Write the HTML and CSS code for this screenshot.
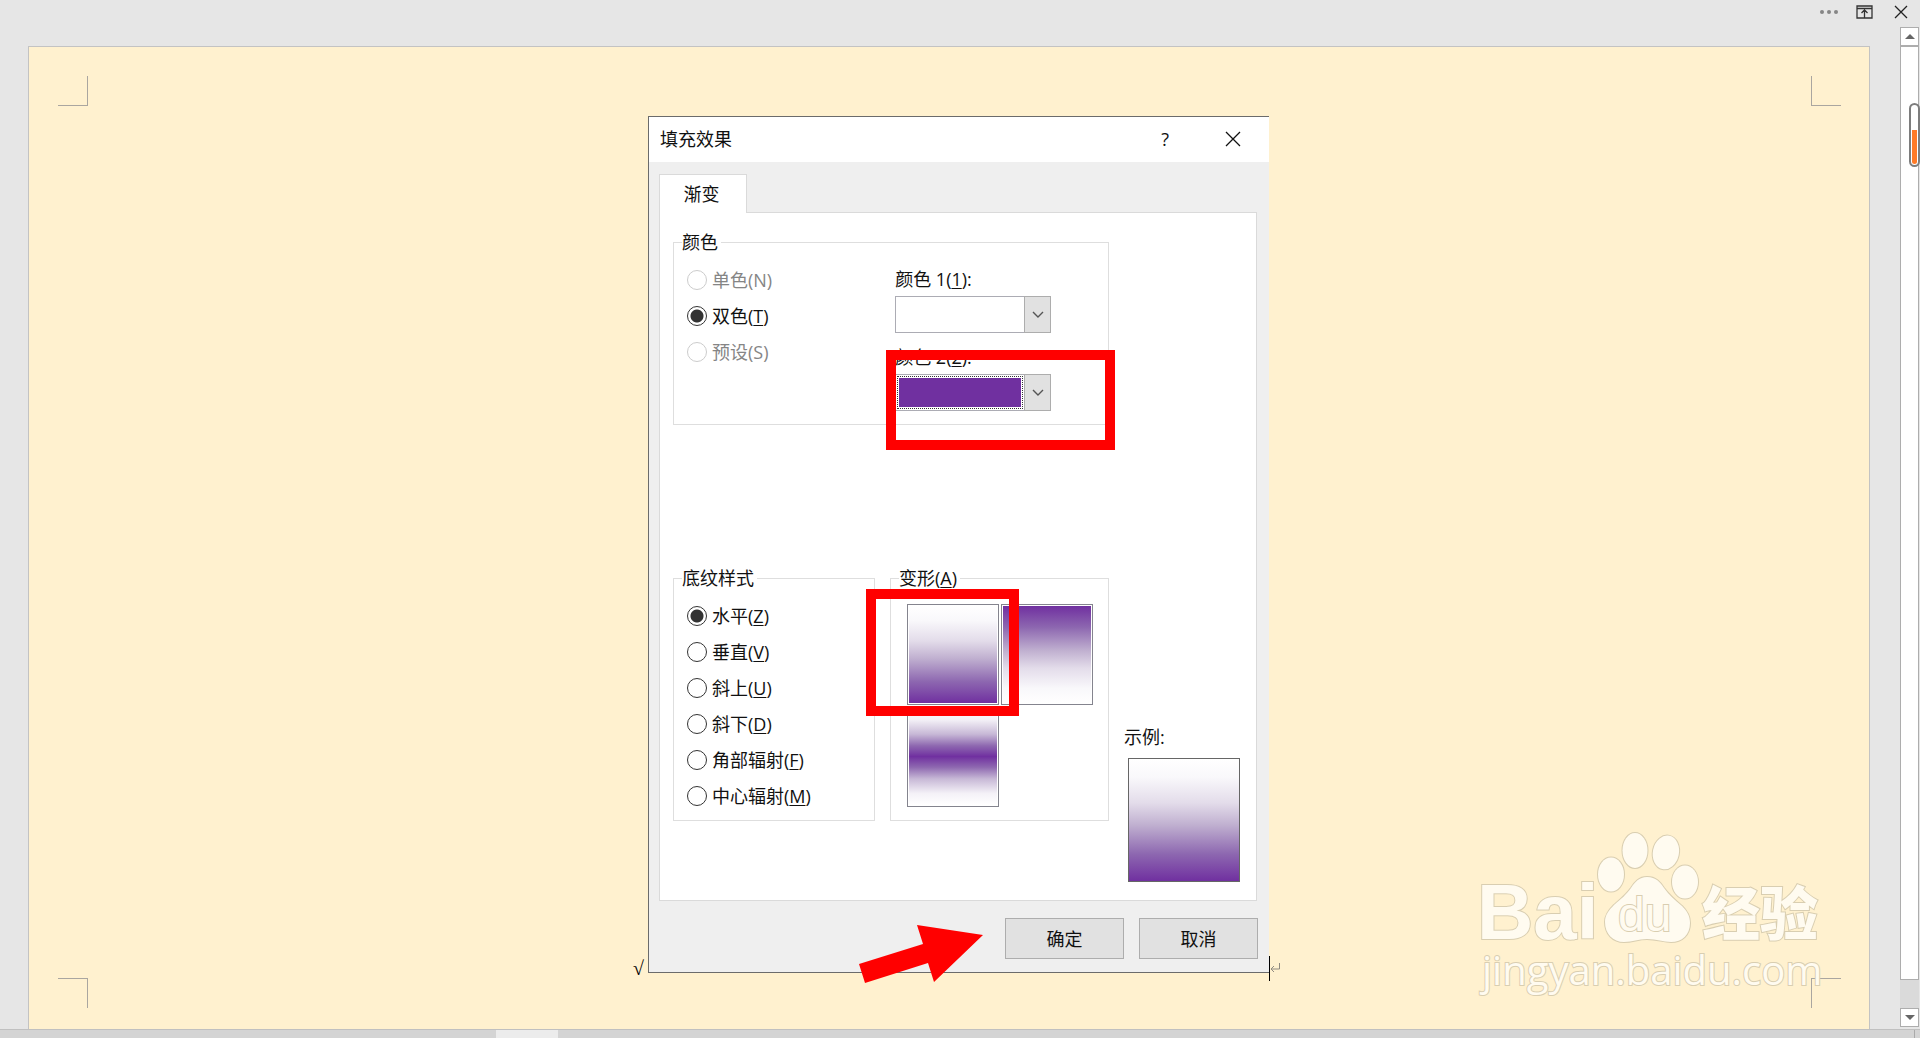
FILE: index.html
```html
<!DOCTYPE html>
<html lang="zh-CN">
<head>
<meta charset="utf-8">
<title>填充效果</title>
<link rel="stylesheet" href="styles.css">
</head>
<body>
<div class="app">
  <header class="window-bar">
    <button class="window-button" type="button" aria-label="更多">
      <svg width="18" height="20" viewBox="0 0 18 20" fill="#868686"><circle cx="2" cy="10" r="2"/><circle cx="9" cy="10" r="2"/><circle cx="16" cy="10" r="2"/></svg>
    </button>
    <button class="window-button" type="button" aria-label="功能区显示选项">
      <svg width="18" height="20" viewBox="0 0 18 20" fill="none" stroke="#333" stroke-width="1.3"><path d="M1 4h15v12H1zM1 6.500h15M8.500 15.500V8M5.500 11l3-3 3 3"/></svg>
    </button>
    <button class="window-button" type="button" aria-label="关闭窗口">
      <svg width="18" height="20" viewBox="0 0 18 20" fill="none" stroke="#222" stroke-width="1.3"><path d="M3 4l12 12M15 4L3 16"/></svg>
    </button>
  </header>

  <div class="workspace">
    <main class="page">
      <i class="crop crop-tl"></i>
      <i class="crop crop-tr"></i>
      <i class="crop crop-bl"></i>
      <i class="crop crop-br"></i>

      <div class="paragraph">
        <span class="check">√</span>
        <section class="dialog" role="dialog" aria-labelledby="dialog-title">
          <header class="dialog-bar">
            <h1 class="dialog-title" id="dialog-title">填充效果</h1>
            <button class="dialog-button" type="button">?</button>
            <button class="dialog-button" type="button" aria-label="关闭">
              <svg width="16" height="16" viewBox="0 0 16 16" fill="none" stroke="#111" stroke-width="1.3"><path d="M1 1l14 14M15 1L1 15"/></svg>
            </button>
          </header>

          <div class="dialog-body">
            <button class="tab" type="button" role="tab" aria-selected="true">渐变</button>
            <div class="panel">
              <fieldset class="group group-colors">
                <legend>颜色</legend>
                <div class="options">
                  <label class="option is-off"><input type="radio" name="mode" disabled>单色(N)</label>
                  <label class="option"><input type="radio" name="mode" checked><span>双色(<u>T</u>)</span></label>
                  <label class="option is-off"><input type="radio" name="mode" disabled>预设(S)</label>
                </div>
                <div class="pickers">
                  <label for="color-1">颜色 1(<u>1</u>):</label>
                  <div class="combo">
                    <select id="color-1"><option value="#ffffff"></option></select>
                    <span class="combo-arrow"><svg width="12" height="8" viewBox="0 0 12 8" fill="none" stroke="#555" stroke-width="1.4"><path d="M1 1l5 5 5-5"/></svg></span>
                  </div>
                  <label for="color-2">颜色 2(<u>2</u>):</label>
                  <div class="combo">
                    <select id="color-2"><option value="#7030a0"></option></select>
                    <span class="combo-value"></span>
                    <span class="combo-arrow"><svg width="12" height="8" viewBox="0 0 12 8" fill="none" stroke="#555" stroke-width="1.4"><path d="M1 1l5 5 5-5"/></svg></span>
                  </div>
                </div>
                <i class="highlight highlight-color"></i>
              </fieldset>

              <fieldset class="group group-styles">
                <legend>底纹样式</legend>
                <div class="options">
                  <label class="option"><input type="radio" name="style" checked><span>水平(<u>Z</u>)</span></label>
                  <label class="option"><input type="radio" name="style"><span>垂直(<u>V</u>)</span></label>
                  <label class="option"><input type="radio" name="style"><span>斜上(<u>U</u>)</span></label>
                  <label class="option"><input type="radio" name="style"><span>斜下(<u>D</u>)</span></label>
                  <label class="option"><input type="radio" name="style"><span>角部辐射(<u>F</u>)</span></label>
                  <label class="option"><input type="radio" name="style"><span>中心辐射(<u>M</u>)</span></label>
                </div>
              </fieldset>

              <fieldset class="group group-variants">
                <legend>变形(<u>A</u>)</legend>
                <div class="variants">
                  <button class="variant variant-down" type="button" aria-label="由浅到深"></button>
                  <button class="variant variant-up" type="button" aria-label="由深到浅"></button>
                  <button class="variant variant-middle" type="button" aria-label="中间深"></button>
                </div>
                <i class="highlight highlight-variant"></i>
              </fieldset>

              <figure class="sample">
                <figcaption>示例:</figcaption>
                <div class="sample-fill"></div>
              </figure>
            </div>

            <footer class="actions">
              <button class="action" type="button">确定</button>
              <button class="action" type="button">取消</button>
            </footer>
          </div>
          <svg class="pointer" width="126" height="60" viewBox="0 0 126 60"><path fill="#f00" d="M59 1L125 11 76 58 70 39 7 59 1 40 65 20z"/></svg>
        </section>
        <i class="caret"></i>
        <svg class="return-mark" width="10" height="10" viewBox="0 0 10 10" fill="none" stroke="#8f8a80"><path d="M9.500 0v6H1M4 3L1 6l3 3"/></svg>
      </div>

      <svg class="watermark" width="360" height="170" viewBox="1470 830 360 170" aria-label="Baidu 经验">
        <g class="watermark-ink">
          <text class="brand" x="1477" y="939">Bai</text>
          <ellipse cx="1611" cy="874.5" rx="13" ry="17"/>
          <ellipse cx="1635" cy="850.5" rx="12.500" ry="17.500"/>
          <ellipse cx="1666" cy="852.5" rx="13" ry="17" transform="rotate(12 1666 852)"/>
          <ellipse cx="1685" cy="882" rx="13" ry="16.500"/>
          <path d="M1647 877c9 0 13 5 17 11 5 7 11 12 18 18 5 5 8 10 8 17 0 12-8 19-19 19-8 0-14-3-24-3-9 0-14 3-23 3-11 0-19-8-19-20 0-7 4-12 9-17 7-6 12-10 17-17 4-6 8-11 16-11z"/>
          <text class="brand-du" x="1618" y="931">du</text>
          <text class="brand-cn" x="1702" y="935">经验</text>
          <text class="brand-url" x="1482" y="985">jingyan.baidu.com</text>
        </g>
      </svg>
    </main>

    <aside class="scrollbar">
      <button class="scroll-button" type="button" aria-label="向上滚动"><svg width="10" height="5" viewBox="0 0 10 5"><path fill="#666" d="M5 0l5 5H0z"/></svg></button>
      <div class="scroll-thumb"></div>
      <button class="scroll-button" type="button" aria-label="向下滚动"><svg width="10" height="5" viewBox="0 0 10 5"><path fill="#666" d="M0 0h10L5 5z"/></svg></button>
      <div class="meter"></div>
    </aside>
  </div>

  <footer class="bottom-bar"><span class="bottom-light"></span><span class="bottom-end"></span></footer>
</div>
</body>
</html>
```
FILE: styles.css
```css
* { box-sizing: border-box; }

body {
  margin: 0;
  background: #fff;
  color: #111;
  font: 18px/24px "Open Sans", "Noto Sans CJK SC", sans-serif;
}

button {
  padding: 0;
  border: 0;
  background: none;
  color: inherit;
  font: inherit;
}

svg { display: block; }

u { text-underline-offset: 2px; }

.app {
  display: flex;
  flex-direction: column;
  min-height: 100vh;
  margin-right: 8px;
  background: #e6e6e6;
}

.window-bar {
  display: flex;
  justify-content: flex-end;
  gap: 18px;
  height: 27px;
  padding: 2px 10px 0 0;
}

.window-button { height: 20px; }

.workspace {
  display: flex;
  flex: 1;
  gap: 30px;
  padding: 0 1px 0 28px;
}

/* Document page with its four margin marks */
.page {
  position: relative;
  flex: 1;
  display: grid;
  grid-template-columns: 30px 1fr 30px;
  grid-template-rows: 30px 1fr 30px;
  margin-top: 19px;
  padding: 29px 28px 21px 29px;
  border: 1px solid #c3c3c3;
  border-bottom: 0;
  background: #fff1cf;
}

.crop { border: 0 solid #aaa6a0; }
.crop-tl { grid-area: 1 / 1; border-width: 0 1px 1px 0; }
.crop-tr { grid-area: 1 / 3; border-width: 0 0 1px 1px; }
.crop-bl { grid-area: 3 / 1; border-width: 1px 1px 0 0; }
.crop-br { grid-area: 3 / 3; border-width: 1px 0 0 1px; }

.paragraph {
  grid-area: 2 / 2;
  display: flex;
  justify-content: center;
  align-items: flex-end;
  align-self: start;
  padding: 10px 0 0 14px;
}

.check {
  width: 15px;
  margin-bottom: -5px;
  color: #000;
  font: 20px/20px "Liberation Serif", serif;
}

.caret {
  width: 1px;
  height: 25px;
  margin-bottom: -8px;
  background: #000;
}

/* Dialog */
.dialog {
  position: relative;
  width: 621px;
  border: 1px solid #6b6b6b;
  border-right: 0;
  background: #efefef;
}

.dialog-bar {
  display: flex;
  align-items: center;
  height: 45px;
  padding: 0 28px 2px 11px;
  gap: 56px;
  background: #fff;
}

.dialog-title {
  flex: 1;
  margin: 0;
  font: inherit;
}

.dialog-body { padding: 12px 12px 13px 10px; }

.tab {
  position: relative;
  display: block;
  width: 88px;
  height: 39px;
  margin-bottom: -1px;
  padding-right: 3px;
  border: 1px solid #dadada;
  border-bottom: 0;
  background: #fff;
}

.panel {
  display: grid;
  grid-template-columns: 202px 219px 1fr;
  grid-template-rows: auto 316px;
  column-gap: 15px;
  row-gap: 141px;
  padding: 17px 14px 18px 13px;
  border: 1px solid #dadada;
  background: #fff;
}

.group {
  position: relative;
  min-width: 0;
  margin: 0;
  padding: 0 13px;
  border: 1px solid #dedede;
}

.group legend {
  margin-left: -5px;
  padding: 0 3px 0 0;
}

.group-colors {
  grid-area: 1 / 1 / 2 / 3;
  display: flex;
  height: 195px;
}

.group-styles,
.group-variants {
  grid-row: 2;
  align-self: start;
  height: 255px;
}

.options {
  display: grid;
  grid-auto-rows: 36px;
  align-content: start;
  padding-top: 8px;
}

.option {
  display: flex;
  align-items: center;
  gap: 5px;
}

.is-off { color: #858585; }

.option input {
  appearance: none;
  width: 20px;
  height: 20px;
  margin: 0;
  border: 1px solid #333;
  border-radius: 50%;
  background: #fff;
}

.option input:checked { background: radial-gradient(circle, #333 6px, #fff 7px); }
.option input:disabled { border-color: #ccc; }

.pickers {
  display: grid;
  grid-template-rows: 29px 37px 41px 37px;
  align-content: start;
  width: 156px;
  margin-left: 123px;
  padding-top: 13px;
}

.pickers label:nth-of-type(2) { padding-top: 12px; }

.combo {
  display: grid;
  grid-template-columns: 1fr 27px;
}

.combo select {
  appearance: none;
  grid-area: 1 / 1 / 2 / 3;
  border: 1px solid #acacb4;
  border-radius: 0;
  background: #fff;
}

.combo-value {
  grid-area: 1 / 1;
  margin: 2px 1px 2px 2px;
  padding: 1px;
  border: 1px dotted #333;
  background: #7030a0 content-box;
  pointer-events: none;
}

.combo-arrow {
  grid-area: 1 / 2;
  display: grid;
  place-items: center;
  border: 1px solid #adadad;
  background: #e1e1e1;
  pointer-events: none;
}

.variants {
  display: grid;
  grid-template-columns: 92px 92px;
  grid-auto-rows: 101px;
  gap: 1px 2px;
  padding: 14px 0 0 3px;
}

.variant {
  padding: 1px;
  border: 1px solid #84848e;
  background: #fff content-box;
}

.variant-down,
.sample-fill { background-image: linear-gradient(#fff, #f9f8fb 15%, #e3dcea 36%, #c0b0d0 54%, #8d67b0 78%, #7030a0); }
.variant-up { background-image: linear-gradient(#7030a0, #8d67b0 22%, #c0b0d0 46%, #e3dcea 64%, #f9f8fb 85%, #fff); }
.variant-middle { background-image: linear-gradient(#fff, #f4f1f7 12%, #c7b8d6 27%, #8e68b0 39%, #7030a0 50%, #8e68b0 61%, #c7b8d6 73%, #f4f1f7 88%, #fff); }

.sample {
  grid-area: 2 / 3;
  align-self: end;
  margin: 0;
}

.sample-fill {
  height: 124px;
  width: 112px;
  margin: 9px 0 0 4px;
  border: 1px solid #666;
}

.actions {
  display: flex;
  justify-content: flex-end;
  gap: 15px;
  margin: 17px -1px 0 0;
}

.action {
  width: 119px;
  height: 41px;
  border: 1px solid #adadad;
  background: #e1e1e1;
}

/* Red annotations drawn over the dialog */
.highlight {
  position: absolute;
  border: 10px solid #f00;
}

.highlight-color {
  left: 212px;
  top: 96px;
  width: 229px;
  height: 100px;
}

.highlight-variant {
  left: -25px;
  top: -1px;
  width: 153px;
  height: 127px;
}

.pointer {
  position: absolute;
  left: 209px;
  bottom: -12px;
}

/* Logo stamped over the corner of the page */
.watermark {
  position: absolute;
  right: 39px;
  bottom: 29px;
  pointer-events: none;
}

.watermark-ink {
  fill: #fffbf0;
  stroke: #d9ceb1;
  stroke-width: 2px;
  paint-order: stroke;
  font-family: "Liberation Sans", "Noto Sans CJK SC", sans-serif;
  font-weight: 700;
}

.brand { font-size: 78px; }
.brand-du { font-size: 48px; font-weight: 400; }
.brand-cn { font-size: 58px; font-weight: 900; }
.brand-url { font: 500 40px "Open Sans", sans-serif; }

/* Scroll bar */
.scrollbar {
  position: relative;
  display: flex;
  flex-direction: column;
  width: 19px;
  padding-bottom: 2px;
}

.scroll-button {
  display: grid;
  place-items: center;
  height: 19px;
  border: 1px solid #adadad;
  background: #fff;
}

.scroll-thumb {
  flex: 1;
  border: 1px solid #adadad;
  background: #fff;
  margin-bottom: 28px;
  box-shadow: 0 28px #dadada;
}

.meter {
  position: absolute;
  right: -1px;
  top: 76px;
  width: 11px;
  height: 64px;
  border: 2px solid #7d7d7d;
  border-radius: 6px;
  padding: 25px 1px 1px;
  background: linear-gradient(#ff7a26, #ff7a26) content-box, #fff;
}

.bottom-bar {
  display: flex;
  justify-content: space-between;
  height: 9px;
  border-top: 1px solid #c0c0c0;
  background: #d4d4d4;
}

.bottom-light {
  width: 62px;
  margin-left: 496px;
  background: #ececec;
}

.bottom-end {
  width: 6px;
  border-left: 1px solid #aaa;
}
```
